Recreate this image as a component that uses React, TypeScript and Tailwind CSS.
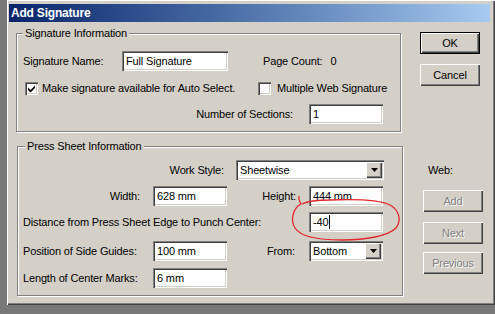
import React from "react";

const raised =
  "bg-[#d4d0c8] shadow-[inset_1px_1px_0_#fff,inset_-1px_-1px_0_#404040,inset_-2px_-2px_0_#808080]";
const sunken =
  "bg-white shadow-[inset_1px_1px_0_#808080,inset_2px_2px_0_#404040,inset_-1px_-1px_0_#fff,inset_-2px_-2px_0_#d4d0c8]";

function Field({ value, width, cursor = false }: { value: string; width: string; cursor?: boolean }) {
  return (
    <div className={`${sunken} ${width} h-[20px] flex items-center pl-[4px] shrink-0`}>
      <span>{value}</span>
      {cursor && <span className="w-px h-[14px] bg-black ml-[1px]" />}
    </div>
  );
}

function Select({ value, width }: { value: string; width: string }) {
  return (
    <div className={`${sunken} ${width} h-[20px] flex items-center pl-[4px] pr-[2px] shrink-0`}>
      <span className="flex-1">{value}</span>
      <div className={`${raised} w-[16px] h-[16px] flex items-center justify-center`}>
        <svg width="7" height="4" viewBox="0 0 7 4">
          <path d="M0 0h7L3.5 4z" fill="#000" />
        </svg>
      </div>
    </div>
  );
}

function Check({ checked }: { checked: boolean }) {
  return (
    <div className={`${sunken} w-[13px] h-[13px] flex items-center justify-center shrink-0`}>
      {checked && (
        <svg width="9" height="9" viewBox="0 0 9 9">
          <path d="M1 3.5L3.5 6L8 1.5V4L3.5 8.5L1 6z" fill="#000" />
        </svg>
      )}
    </div>
  );
}

function Button({ label, disabled = false, isDefault = false }: { label: string; disabled?: boolean; isDefault?: boolean }) {
  if (isDefault) {
    return (
      <div className="w-[60px] h-[22px] border border-black">
        <div className={`${raised} w-full h-full flex items-center justify-center`}>{label}</div>
      </div>
    );
  }
  return (
    <div
      className={`${raised} w-[60px] h-[22px] flex items-center justify-center ${
        disabled ? "text-[#808080] [text-shadow:1px_1px_0_#fff]" : ""
      }`}
    >
      {label}
    </div>
  );
}

function Group({
  title,
  className,
  labelOffset,
  children,
}: {
  title: string;
  className: string;
  labelOffset: string;
  children: React.ReactNode;
}) {
  return (
    <div className={`relative border border-[#808080] shadow-[inset_1px_1px_0_#fff,1px_1px_0_#fff] ${className}`}>
      <span className={`absolute -top-[7px] ${labelOffset} px-[2px] leading-[13px] bg-[#d4d0c8]`}>{title}</span>
      {children}
    </div>
  );
}

export default function App() {
  return (
    <div className="relative w-[495px] h-[314px] bg-[#787878] overflow-hidden font-['Liberation_Sans',Arial,sans-serif] text-[11px] tracking-[-0.15px] text-black leading-[13px]">
      <div className="ml-[7px] w-[488px] h-[305px] bg-[#d4d0c8] pt-[4px] px-[2px] shadow-[inset_1px_1px_0_#fff,inset_-1px_-1px_0_#404040,inset_-2px_-2px_0_#808080]">
        <div className="w-[481px] h-[18px] bg-gradient-to-r from-[#0a246a] to-[#a6caf0] flex items-center pl-[2px]">
          <span className="text-white font-bold text-[12px] tracking-[-0.2px]">Add Signature</span>
        </div>

        <div className="flex">
          <div className="ml-[7px] w-[387px] shrink-0">
            <Group title="Signature Information" labelOffset="left-[6px]" className="mt-[11px] w-[385px] h-[99px] pt-[17px]">
              <div className="flex items-center h-[20px]">
                <span className="w-[105px] pl-[6px]">Signature Name:</span>
                <Field value="Full Signature" width="w-[106px]" />
                <span className="ml-[35px]">Page Count:</span>
                <span className="ml-[8px]">0</span>
              </div>
              <div className="flex items-center h-[13px] mt-[11px]">
                <div className="w-[241px] flex items-center pl-[8px]">
                  <Check checked />
                  <span className="ml-[4px]">Make signature available for Auto Select.</span>
                </div>
                <Check checked={false} />
                <span className="ml-[6px]">Multiple Web Signature</span>
              </div>
              <div className="flex items-center h-[20px] mt-[9px]">
                <span className="w-[276px] text-right">Number of Sections:</span>
                <div className="ml-[16px]">
                  <Field value="1" width="w-[74px]" />
                </div>
              </div>
            </Group>

            <Group title="Press Sheet Information" labelOffset="left-[7px]" className="mt-[14px] ml-[1px] w-[386px] h-[150px] pt-[13px]">
              <div className="flex items-center h-[20px]">
                <span className="w-[206px] text-right">Work Style:</span>
                <div className="ml-[12px]">
                  <Select value="Sheetwise" width="w-[148px]" />
                </div>
              </div>
              <div className="flex items-center h-[20px] mt-[6px]">
                <span className="w-[122px] text-right">Width:</span>
                <div className="ml-[13px]">
                  <Field value="628 mm" width="w-[74px]" />
                </div>
                <span className="w-[69px] text-right">Height:</span>
                <div className="ml-[13px]">
                  <Field value="444 mm" width="w-[74px]" />
                </div>
              </div>
              <div className="flex items-center h-[20px] mt-[6px]">
                <span className="w-[291px] pl-[5px]">Distance from Press Sheet Edge to Punch Center:</span>
                <Field value="-40" width="w-[74px]" cursor />
              </div>
              <div className="flex items-center h-[20px] mt-[9px]">
                <span className="w-[135px] pl-[5px]">Position of Side Guides:</span>
                <Field value="100 mm" width="w-[74px]" />
                <span className="w-[68px] text-right">From:</span>
                <div className="ml-[14px]">
                  <Select value="Bottom" width="w-[74px]" />
                </div>
              </div>
              <div className="flex items-center h-[20px] mt-[7px]">
                <span className="w-[135px] pl-[5px]">Length of Center Marks:</span>
                <Field value="6 mm" width="w-[74px]" />
              </div>
            </Group>
          </div>

          <div className="ml-[17px] flex flex-col">
            <div className="mt-[10px]">
              <Button label="OK" isDefault />
            </div>
            <div className="mt-[10px]">
              <Button label="Cancel" />
            </div>
            <span className="mt-[78px] pl-[8px]">Web:</span>
            <div className="mt-[13px] ml-[3px] flex flex-col gap-[8px]">
              <Button label="Add" disabled />
              <div className="mt-[2px]">
                <Button label="Next" disabled />
              </div>
              <Button label="Previous" disabled />
            </div>
          </div>
        </div>
      </div>

      <svg className="absolute left-0 top-0 pointer-events-none" width="495" height="314" viewBox="0 0 495 314">
        <path
          d="M299 196 C298 200 300 202 301 204 C293 208 290 220 295 228 C300 236 318 240 342 240 C366 240 388 236 396 228 C402 220 399 210 390 205 C378 199 355 199 330 200 C318 200 308 201 302 204"
          fill="none"
          stroke="#e0282a"
          strokeWidth="1.3"
        />
      </svg>
    </div>
  );
}
